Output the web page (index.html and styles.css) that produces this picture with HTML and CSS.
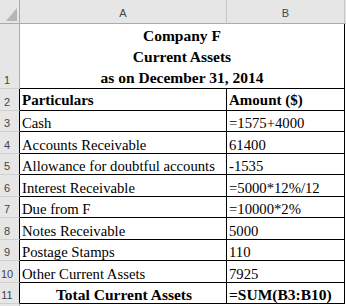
FILE: index.html
```html
<!DOCTYPE html>
<html>
<head>
<meta charset="utf-8">
<link rel="stylesheet" href="styles.css">
</head>
<body>
<table class="sheet">
  <colgroup>
    <col class="c-rh"><col class="c-a"><col class="c-b"><col class="c-rest">
  </colgroup>
  <thead>
    <tr class="hdr">
      <th class="corner"><svg class="tri" width="11" height="13" viewBox="0 0 11 13"><polygon points="0,13 11,13 11,0" fill="#b5b5b5"/></svg></th>
      <th class="colh">A</th>
      <th class="colh">B</th>
      <th class="colh rest"></th>
    </tr>
  </thead>
  <tbody>
    <tr class="r1">
      <td class="rh rh-light">1</td>
      <td class="cell title" colspan="2"><div>Company F</div><div>Current Assets</div><div>as on December 31, 2014</div></td>
      <td class="rest"></td>
    </tr>
    <tr class="r2">
      <td class="rh">2</td>
      <td class="cell bold head">Particulars</td>
      <td class="cell bold head">Amount ($)</td>
      <td class="rest"></td>
    </tr>
    <tr class="h21"><td class="rh">3</td><td class="cell">Cash</td><td class="cell">=1575+4000</td><td class="rest"></td></tr>
    <tr class="h22"><td class="rh">4</td><td class="cell">Accounts Receivable</td><td class="cell">61400</td><td class="rest"></td></tr>
    <tr class="h21"><td class="rh">5</td><td class="cell">Allowance for doubtful accounts</td><td class="cell">-1535</td><td class="rest"></td></tr>
    <tr class="h22"><td class="rh">6</td><td class="cell">Interest Receivable</td><td class="cell">=5000*12%/12</td><td class="rest"></td></tr>
    <tr class="h21"><td class="rh">7</td><td class="cell">Due from F</td><td class="cell">=10000*2%</td><td class="rest"></td></tr>
    <tr class="h22"><td class="rh">8</td><td class="cell">Notes Receivable</td><td class="cell">5000</td><td class="rest"></td></tr>
    <tr class="h21"><td class="rh">9</td><td class="cell">Postage Stamps</td><td class="cell">110</td><td class="rest"></td></tr>
    <tr class="h22"><td class="rh">10</td><td class="cell">Other Current Assets</td><td class="cell">7925</td><td class="rest"></td></tr>
    <tr class="h21">
      <td class="rh">11</td>
      <td class="cell bold total center">Total Current Assets</td>
      <td class="cell bold total">=SUM(B3:B10)</td>
      <td class="rest"></td>
    </tr>
    <tr class="r12"><td class="rh rh-light"></td><td class="blank"></td><td class="blank"></td><td class="rest"></td></tr>
  </tbody>
</table>
</body>
</html>
```

FILE: styles.css
```css
html, body {
  margin: 0;
  padding: 0;
  background: #ffffff;
  overflow: hidden;
}

.sheet {
  width: 346px;
  table-layout: fixed;
  border-collapse: separate;
  border-spacing: 0;
  font-family: "Liberation Serif", "Times New Roman", serif;
  color: #000;
}

.c-rh { width: 20px; }
.c-a { width: 207px; }
.c-b { width: 118px; }
.c-rest { width: 1px; }

th, td {
  padding: 0;
  margin: 0;
  box-sizing: border-box;
}

/* column header */
.hdr { height: 24px; }
.hdr th {
  background: #e6e6e6;
  border-bottom: 1px solid #ababab;
  border-right: 1px solid #c6c6c6;
  font-family: "Liberation Sans", Arial, sans-serif;
  font-weight: normal;
  font-size: 11px;
  color: #444;
  text-align: center;
  vertical-align: middle;
  padding-top: 3px;
}
.hdr th.corner {
  border-right: 1px solid #ababab;
  text-align: right;
  vertical-align: bottom;
  padding: 0 2px 2px 0;
  line-height: 0;
}
.hdr th.rest { border-right: none; }

/* row headers */
.rh {
  background: #e6e6e6;
  border-right: 1px solid #ababab;
  border-bottom: 1px solid #d0d0d0;
  font-family: "Liberation Sans", Arial, sans-serif;
  font-size: 11px;
  line-height: 13px;
  color: #444;
  text-align: center;
  padding-right: 5px;
  vertical-align: bottom;
  padding-bottom: 1px;
}
.r2 .rh, .h21 .rh, .h22 .rh { border-right-color: #000; }

/* body cells */
.cell {
  border-right: 1px solid #000;
  border-bottom: 1px solid #000;
  font-size: 14.7px;
  line-height: 15px;
  vertical-align: bottom;
  padding-left: 2px;
  white-space: nowrap;
  overflow: hidden;
}
.bold { font-weight: bold; }
.center { text-align: center; }

.r1 { height: 65px; }
.r2 { height: 22px; }
.h21 { height: 21px; }
.h22 { height: 22px; }
.r12 { height: 20px; }

.title {
  text-align: center;
  font-weight: bold;
  font-size: 15.5px;
  line-height: 21px;
  padding-left: 0;
}

.head {
  font-size: 15px;
  line-height: 17px;
  padding-bottom: 1px;
}

.total {
  font-size: 15.5px;
  line-height: 17px;
}

.rest { border: none; }
.blank { border: none; }
```
